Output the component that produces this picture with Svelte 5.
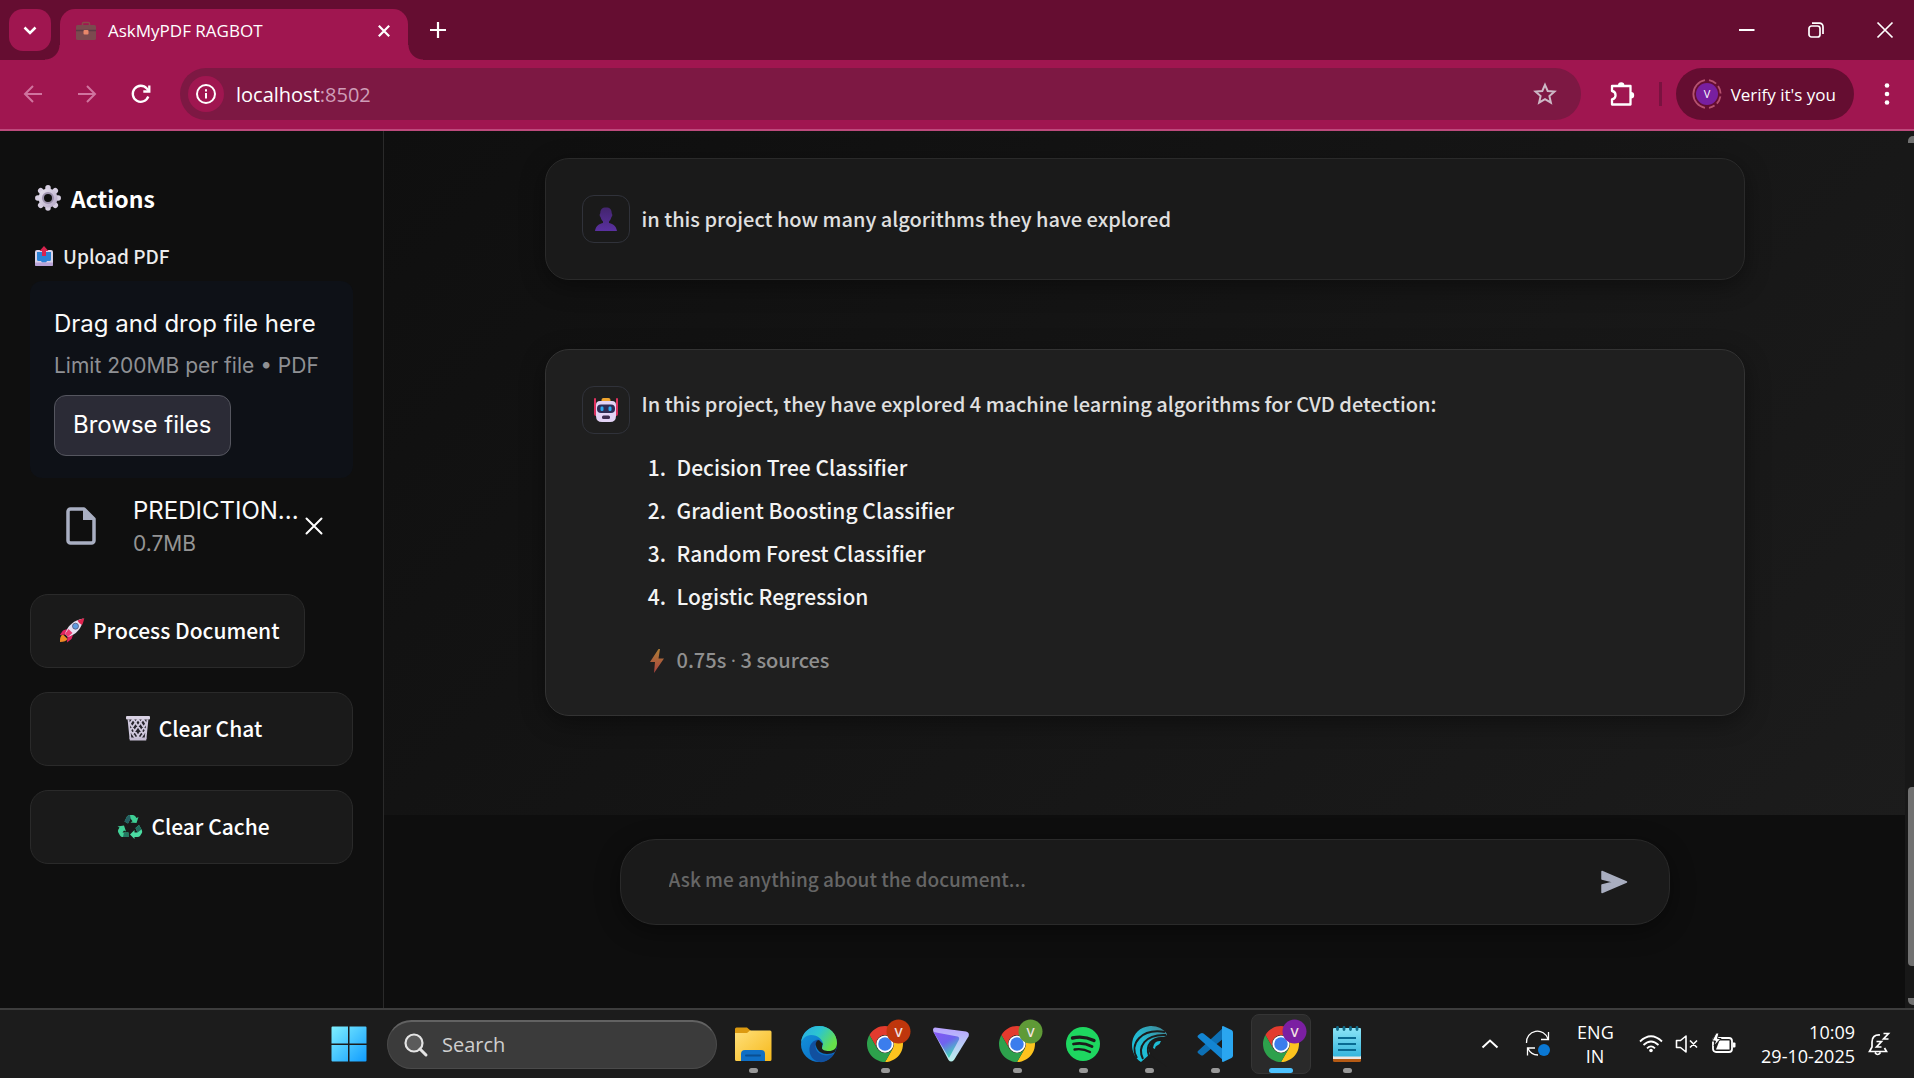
<script>
  let question = $state('');

  const algorithms = [
    'Decision Tree Classifier',
    'Gradient Boosting Classifier',
    'Random Forest Classifier',
    'Logistic Regression'
  ];
</script>

{#snippet cross()}
  <svg width="18" height="18" viewBox="0 0 18 18" fill="none" stroke="currentColor" stroke-width="2" stroke-linecap="round"><path d="M1.5 1.5l15 15M16.5 1.5l-15 15" /></svg>
{/snippet}

{#snippet chrome(color)}
  <svg width="48" height="48" viewBox="0 0 48 48">
    <g transform="translate(6 6) scale(.75)">
      <path d="M3.22 12A24 24 0 0 1 44.78 12L24 12A12 12 0 0 0 13.61 30Z" fill="#e33b2e" />
      <path d="M44.78 12A24 24 0 0 1 24 48L34.39 30A12 12 0 0 0 24 12Z" fill="#fcc31e" />
      <path d="M24 48A24 24 0 0 1 3.22 12L13.61 30A12 12 0 0 0 34.39 30Z" fill="#2da14c" />
      <circle cx="24" cy="24" r="11.5" fill="#fff" />
      <circle cx="24" cy="24" r="9" fill="#3b7ded" />
    </g>
    <circle cx="37.500" cy="11.500" r="12" fill={color} />
    <text x="37.500" y="16.500" text-anchor="middle" font-size="13" font-weight="600" fill="#f3e3e3">V</text>
  </svg>
{/snippet}

<div class="desktop">
  <header class="tabstrip">
    <button class="tabsearch" aria-label="Search tabs">
      <svg width="14" height="9" viewBox="0 0 14 9" fill="none" stroke="#fff" stroke-width="2.500"><path d="M1.500 1.500L7 7l5.500-5.500" /></svg>
    </button>
    <div class="tab">
      <svg width="20" height="20" viewBox="0 0 20 20">
        <path d="M6.500 4V2.500Q6.500 1.500 7.500 1.500h5Q13.500 1.500 13.500 2.500V4" fill="none" stroke="#8a4a4a" stroke-width="1.500" />
        <rect x="0" y="4" width="20" height="15" rx="1.500" fill="#7b4a4f" /><path d="M0 9.500h20" stroke="#5c3b44" stroke-width="1.500" />
        <rect x="7.500" y="9" width="5" height="4.500" rx="1" fill="#e8876a" />
      </svg>
      <span class="tabtitle">AskMyPDF RAGBOT</span>
      <button class="bare tabclose" aria-label="Close tab"><svg width="12" height="12" viewBox="0 0 12 12" stroke="#fff" stroke-width="2.200"><path d="M.8.8l10.400 10.400M11.200.8L.8 11.200" /></svg></button>
    </div>
    <button class="bare newtab" aria-label="New tab"><svg width="16" height="16" viewBox="0 0 16 16" stroke="#fff" stroke-width="2.200"><path d="M8 0v16M0 8h16" /></svg></button>
    <div class="wincontrols">
      <button class="bare" aria-label="Minimize"><svg width="16" height="16" viewBox="0 0 16 16"><path d="M0 8h15.500" stroke="#fff" stroke-width="2" /></svg></button>
      <button class="bare" aria-label="Restore"><svg width="16" height="16" viewBox="0 0 16 16" fill="none" stroke="#fff" stroke-width="1.700"><rect x="1" y="4" width="11" height="11" rx="2.500" /><path d="M4 1.200h7.500a3.500 3.500 0 0 1 3.500 3.500V12" /></svg></button>
      <button class="bare" aria-label="Close"><svg width="16" height="16" viewBox="0 0 16 16" stroke="#fff" stroke-width="1.700"><path d="M.5.5l15 15M15.500.5l-15 15" /></svg></button>
    </div>
  </header>

  <nav class="toolbar" aria-label="Browser">
    <div class="navbtns">
      <button class="bare dim" aria-label="Back"><svg width="20" height="20" viewBox="0 0 20 20" fill="none" stroke="currentColor" stroke-width="2"><path d="M19 10H2M10 2l-8 8 8 8" /></svg></button>
      <button class="bare dim" aria-label="Forward"><svg width="20" height="20" viewBox="0 0 20 20" fill="none" stroke="currentColor" stroke-width="2"><path d="M1 10h17M10 2l8 8-8 8" /></svg></button>
      <button class="bare" aria-label="Reload"><svg width="20" height="20" viewBox="0 0 20 20" fill="none" stroke="#fff" stroke-width="2.300"><path d="M17.300 12.500A8 8 0 1 1 15.800 4.500L18 7" /><path d="M18.300 1.500v6h-6" /></svg></button>
    </div>
    <div class="address">
      <button class="bare siteinfo" aria-label="Site information"><svg width="20" height="20" viewBox="0 0 20 20" fill="none" stroke="#fff" stroke-width="2"><circle cx="10" cy="10" r="9" /><path d="M10 9v5.500M10 5.200v2.200" /></svg></button>
      <span class="url">localhost<span>:8502</span></span>
      <button class="bare star" aria-label="Bookmark this page"><svg width="24" height="24" viewBox="0 0 24 24" fill="none" stroke="#cdb9c6" stroke-width="2"><path d="M12 2.800l2.700 6.200 6.800.6-5.100 4.500 1.500 6.600-5.900-3.500-5.900 3.500 1.500-6.600L2.500 9.600l6.800-.6z" /></svg></button>
    </div>
    <button class="bare ext" aria-label="Extensions"><svg width="26" height="26" viewBox="0 0 26 26"><path d="M3 5h18.500v18.500H3v-5.200a4.200 4.200 0 0 0 0-8.300z" fill="none" stroke="#fff" stroke-width="2.300" stroke-linejoin="round" /><path d="M9 4.500a3.200 3.200 0 0 1 6.400 0zM22 11a3.200 3.200 0 0 1 0 6.400z" fill="#fff" /></svg></button>
    <span class="divider"></span>
    <button class="profile">
      <svg width="30" height="30" viewBox="0 0 30 30"><circle cx="15" cy="15" r="11" fill="#781fa0" /><path d="M13 1.200A14 14 0 0 0 13 28.800" fill="none" stroke="#b5526f" stroke-width="1.800" /><path d="M17 1.200A14 14 0 0 1 17 28.800" fill="none" stroke="#b5526f" stroke-width="1.800" stroke-dasharray="8 3" /><text x="15" y="19" text-anchor="middle" font-size="11" fill="#fff">V</text></svg>
      Verify it's you
    </button>
    <button class="bare menu" aria-label="Menu"><svg width="6" height="22" viewBox="0 0 6 22" fill="#fff"><circle cx="3" cy="2.500" r="2.300" /><circle cx="3" cy="11" r="2.300" /><circle cx="3" cy="19.500" r="2.300" /></svg></button>
  </nav>

  <div class="page">
    <aside class="sidebar">
      <h2>
        <svg width="26" height="26" viewBox="0 0 26 26"><defs><linearGradient id="gear" x1="0" y1="0" x2="1" y2="1"><stop offset="0" stop-color="#e9e4f0" /><stop offset="1" stop-color="#b4a6c6" /></linearGradient></defs>
          <g stroke="#d5cde0" stroke-width="5.500" stroke-linecap="round"><path d="M13 2.800v20.300M2.800 13h20.400M5.700 5.700l14.600 14.600M20.300 5.700L5.700 20.300" /></g>
          <circle cx="13" cy="13" r="9.500" fill="url(#gear)" /><circle cx="13" cy="13" r="5" fill="#0f0f0f" stroke="#9d92ad" stroke-width="2" /></svg>
        Actions
      </h2>
      <label class="uplabel" for="browse">
        <svg width="18" height="22" viewBox="0 0 18 22"><rect x="0" y="5" width="18" height="16" rx="2" fill="#d8d2ea" /><path d="M2 7h14v7.500q0 1.500-1.500 1.500H12l-1 1.500H7L6 16H3.500Q2 16 2 14.500z" fill="#2b83d6" /><path d="M0 17.500h18V20a1 1 0 0 1-1 1H1a1 1 0 0 1-1-1z" fill="#b9a3d6" /><path d="M7 11V6H4.500L9 1l4.500 5H11v5z" fill="#d8244f" /></svg>
        Upload PDF
      </label>
      <section class="dropzone">
        <span class="drag">Drag and drop file here</span>
        <span class="limit">Limit 200MB per file • PDF</span>
        <button id="browse" class="browse">Browse files</button>
      </section>
      <div class="file">
        <svg width="30" height="38" viewBox="0 0 30 38"><path d="M4.500 2H18l10 10v21.500a2.500 2.500 0 0 1-2.500 2.500h-21A2.500 2.500 0 0 1 2 33.500v-29A2.500 2.500 0 0 1 4.500 2z" fill="none" stroke="#a9afc2" stroke-width="3.500" stroke-linejoin="round" /><path d="M17 1l12 12H17z" fill="#a9afc2" /></svg>
        <div class="fileinfo"><span class="filename">PREDICTION...</span><span class="filesize">0.7MB</span></div>
        <button class="bare" aria-label="Remove file">{@render cross()}</button>
      </div>
      <div class="actions">
        <button class="action process">
          <svg width="26" height="26" viewBox="0 0 26 26"><path d="M1 25q-.5-6 3-7.500L8.500 22Q7 25 1 25z" fill="#f08a24" /><path d="M8 12l-4 1.500L.8 18l6-.5zM14 18l-1.500 4L8 25.500l.5-6z" fill="#e3225f" /><path d="M6 17Q10 4 24.500 1.500 22 16 9 20z" fill="#e6dff0" /><path d="M18.500 3.500q3-1.500 6.800-2.200-.8 4-2.300 6.700-3-.8-4.500-4.500z" fill="#e0244f" /><circle cx="16.500" cy="9.200" r="3" fill="#5f9be0" stroke="#557" stroke-width=".8" /><path d="M6 17l3.500-5 4 4-4.500 4z" fill="#ec3a70" /></svg>
          Process Document
        </button>
        <button class="action">
          <svg width="26" height="26" viewBox="0 0 26 26"><path d="M2.500 3h21l-2 22h-17z" fill="#26242c" /><path d="M3.500 4.500L5.500 24M22.500 4.500L20.500 24M8 4l11 16M13 4l7.500 11M18 4l4 6M4.500 8L15 24M5 15l6 9M18 4L7 20M13 4L5.500 15M8 4l-4 6M21.500 8L11 24M21 15l-6 9" stroke="#cfc8dc" stroke-width="1.800" /><rect x="1" y="1" width="24" height="3.500" rx="1" fill="#d9d2e4" /><path d="M4.500 22.500h17l-.3 3H4.800z" fill="#c5bdd3" /></svg>
          Clear Chat
        </button>
        <button class="action">
          <svg width="26" height="24" viewBox="0 0 26 24"><path d="M7.500 7.500L10 2.500Q11 1 12.500 1H16q1.500 0 2.500 1.500l1 1.500 2-1-2 6-6-.5 2-1.200L13.500 4.500 11 9.500z" fill="#3ecf94" /><path d="M7.500 7.500L10 2.500Q11 1 13 1l.7 3.400L11 9.500z" fill="#255f62" /><path d="M22 11l2.800 5q1 2-.2 3.500L23 22q-.8 1-2.500 1h-3v2l-4.500-4.500 4.500-4.500v2.500h3L18.500 14z" fill="#4bdca2" /><path d="M22 11l2.500 4.500-4 3-2-4.500z" fill="#1f6a5b" /><path d="M11.500 18.500V23H5.500Q4 23 3 21.500L1.300 18.500q-.8-1.500 0-3L2.500 13.500l-2-1 6.500-1 2 6-2-1-1.500 2z" fill="#42d399" /><path d="M11.500 18.500V23H6l1-4.500z" fill="#237a62" /></svg>
          Clear Cache
        </button>
      </div>
    </aside>

    <main>
      <div class="chat">
        <article class="card user">
          <span class="avatar"><svg width="24" height="24" viewBox="0 0 24 24"><defs><linearGradient id="person" x1="0" y1="0" x2="0" y2="1"><stop offset="0" stop-color="#43256e" /><stop offset="1" stop-color="#5a31a0" /></linearGradient></defs><path d="M12 .5c4 0 5.700 2 5.700 5.500 0 1 .8 1 .6 2.500-.2 1-.8 1.300-1 2-.5 2-1.500 3.300-2.300 4v1.500c3 .8 7 2 8 8H1c1-6 5-7.200 8-8v-1.500c-.8-.7-1.800-2-2.300-4-.2-.7-.8-1-1-2C5.500 7 6.300 7 6.300 6 6.300 2.500 8 .5 12 .5z" fill="url(#person)" /></svg></span>
          <div class="body"><p>in this project how many algorithms they have explored</p></div>
        </article>
        <article class="card bot">
          <span class="avatar"><svg width="26" height="26" viewBox="0 0 26 26"><path d="M2 2v12M24 2v12" stroke="#e0305f" stroke-width="2" stroke-linecap="round" /><rect x="1" y="9" width="24" height="10" rx="2" fill="#d9305f" /><rect x="8.500" y="1" width="9" height="5" rx="2" fill="#f0a52e" /><path d="M3 8q0-4 4-4h12q4 0 4 4v11q0 6-6 6H9q-6 0-6-6z" fill="#e3d3f5" /><rect x="4" y="7.500" width="18" height="8.500" rx="4" fill="#2e2c55" /><rect x="7.500" y="9.500" width="3" height="4.500" rx="1.200" fill="#2da9f0" /><rect x="15.500" y="9.500" width="3" height="4.500" rx="1.200" fill="#2da9f0" /><rect x="9" y="18.500" width="8" height="3.500" rx="1.500" fill="#3c2c50" /></svg></span>
          <div class="body">
            <p>In this project, they have explored 4 machine learning algorithms for CVD detection:</p>
            <ol>
              {#each algorithms as name}<li>{name}</li>{/each}
            </ol>
            <div class="meta"><svg width="16" height="24" viewBox="0 0 16 24"><defs><linearGradient id="bolt" x1="0" y1="0" x2="0" y2="1"><stop offset="0" stop-color="#ad7d36" /><stop offset="1" stop-color="#a8423f" /></linearGradient></defs><path d="M9.500 0L1 13h5L5 24l10-14.500H9.500L11 0z" fill="url(#bolt)" /></svg><span>0.75s <span class="dot">·</span> 3 sources</span></div>
          </div>
        </article>
      </div>
      <div class="dock">
        <form class="composer" onsubmit={(e) => e.preventDefault()}>
          <input type="text" bind:value={question} placeholder="Ask me anything about the document..." aria-label="Question" />
          <button class="bare" aria-label="Send"><svg width="28" height="24" viewBox="0 0 28 24"><path d="M2 1.500L26.500 12 2 22.500v-7.500l12-3-12-3z" fill="#a9aec0" stroke="#a9aec0" stroke-width="1.500" stroke-linejoin="round" /></svg></button>
        </form>
      </div>
    </main>
    <div class="scroll" aria-hidden="true"><i class="up"></i><i class="thumb"></i><i class="down"></i></div>
  </div>

  <footer class="taskbar">
    <button class="bare start" aria-label="Start"><svg width="36" height="36" viewBox="0 0 36 36"><defs><linearGradient id="win" x1="0" y1="0" x2="1" y2="1"><stop offset="0" stop-color="#7ff0ff" /><stop offset="1" stop-color="#109cff" /></linearGradient></defs><path d="M1.500.5H17v17H.5V1.500a1 1 0 0 1 1-1zM18.500.5h16a1 1 0 0 1 1 1v16h-17zM.5 19H17v16.500H1.500a1 1 0 0 1-1-1zM18.500 19h17v15.500a1 1 0 0 1-1 1h-16z" fill="url(#win)" /></svg></button>
    <label class="search">
      <svg width="24" height="24" viewBox="0 0 24 24" fill="none" stroke="#e4e4e4"><circle cx="10" cy="10" r="8.500" fill="#5b5b5b" stroke-width="2.200" /><path d="M16 16l6 6" stroke-width="3" stroke-linecap="round" /></svg>
      <input type="text" placeholder="Search" aria-label="Search" />
    </label>
    <div class="apps">
      <button class="app run" aria-label="File Explorer"><svg width="48" height="48" viewBox="0 0 48 48"><defs><linearGradient id="fold" x1="0" y1="0" x2="1" y2="1"><stop offset="0" stop-color="#ffe07a" /><stop offset="1" stop-color="#f6b91c" /></linearGradient></defs><path d="M6 9a1.500 1.500 0 0 1 1.500-1.500H18l4 3.500v5H6z" fill="#dc9a10" /><path d="M6 13h12l3-2.500h20a1.500 1.500 0 0 1 1.500 1.500v27.500a1.500 1.500 0 0 1-1.500 1.500H7.500A1.500 1.500 0 0 1 6 39.500z" fill="url(#fold)" /><path d="M12 41v-7a4 4 0 0 1 4-4h16a4 4 0 0 1 4 4v7z" fill="#0f6fc5" /><path d="M17 35.500h14" stroke="#0a4f91" stroke-width="2" stroke-linecap="round" /></svg></button>
      <button class="app" aria-label="Edge"><svg width="48" height="48" viewBox="0 0 48 48"><defs><linearGradient id="edgetop" x1="0" y1="0" x2="1" y2=".5"><stop offset="0" stop-color="#2aa9e6" /><stop offset=".5" stop-color="#2cc5d0" /><stop offset="1" stop-color="#66e04a" /></linearGradient><linearGradient id="edgeleft" x1="0" y1="0" x2="1" y2="1"><stop offset="0" stop-color="#1397dc" /><stop offset="1" stop-color="#0a62c0" /></linearGradient></defs>
        <circle cx="24" cy="24" r="18" fill="url(#edgeleft)" />
        <path d="M24 42c-8-2-11-10-9-16 2-5 7-7 9-6-4 3-5 9 0 13 4 3 10 3 15 1-3 5-9 9-15 8z" fill="#11509f" />
        <path d="M24 20c-2 0-4 3-3 6 1 5 6 8 11 8 3 0 6-1 8-2l3-9-12 7c-4-1-5-4-3-6z" fill="#1c1c1c" />
        <path d="M6 23C7 12 15 6 24 6c11 0 18 8 18 17 0 6-4 8-8 8-4 0-7-1-7-3 0-1 1-2 1-4 0-4-5-9-12-9-5 0-9 4-10 8z" fill="url(#edgetop)" /></svg></button>
      <button class="app run" aria-label="Chrome profile 1">{@render chrome('#bf360c')}</button>
      <button class="app" aria-label="Proton VPN"><svg width="48" height="48" viewBox="0 0 48 48"><defs><linearGradient id="vpn" x1="0" y1="0" x2=".6" y2="1"><stop offset="0" stop-color="#8757f5" /><stop offset=".5" stop-color="#6f63ee" /><stop offset="1" stop-color="#3fdcb6" /></linearGradient><linearGradient id="vpnedge" x1="0" y1="0" x2="0" y2="1"><stop offset="0" stop-color="#b9a2ff" /><stop offset="1" stop-color="#b9f3ee" /></linearGradient></defs><path d="M8 7.500l31 4q4 1 2.500 5L27 40q-3 3-5.500 0L6.500 12Q5 8 8 7.500z" fill="url(#vpnedge)" /><path d="M6.500 12l24 4.500q2.500.8 1.300 3.500L22 38 6.500 12z" fill="url(#vpn)" /></svg></button>
      <button class="app run" aria-label="Chrome profile 2">{@render chrome('#5f9a37')}</button>
      <button class="app run" aria-label="Spotify"><svg width="48" height="48" viewBox="0 0 48 48"><circle cx="24" cy="24" r="17" fill="#1ed760" /><g fill="none" stroke="#1c1c1c" stroke-linecap="round"><path d="M13.500 18q11-2.500 21.500 2.500" stroke-width="3.400" /><path d="M14.500 24q9.500-2.200 18.500 2.500" stroke-width="2.800" /><path d="M15.500 29.500q8-1.500 15.500 2.500" stroke-width="2.300" /></g></svg></button>
      <button class="app run" aria-label="MySQL shell"><svg width="48" height="48" viewBox="0 0 48 48"><defs><linearGradient id="shell" x1="1" y1="0" x2="0" y2="1"><stop offset="0" stop-color="#45808d" /><stop offset=".5" stop-color="#25b7cf" /><stop offset="1" stop-color="#14c5de" /></linearGradient></defs><path d="M16 42C2 33 4 8 25 6q11-.5 17 8-1 3-4 3-12 2-14 10-1 4 1 7z" fill="url(#shell)" /><path d="M12 38C4 24 16 8 40 12M18 39C12 27 20 14 41 15M24 36C20 25 27 17 39 18" fill="none" stroke="#1c1c1c" stroke-width="2" /><path d="M27 36q-6-12 15-19v30z" fill="#1c1c1c" /><path d="M28 28q1-8 8-7-1 3-3 4-3 1-3 4z" fill="#1fbdd4" /></svg></button>
      <button class="app run" aria-label="Visual Studio Code"><svg width="48" height="48" viewBox="0 0 48 48"><path d="M33 7L7.500 30.500q-2 1.500 0 3l2 1.500q1.500 1 3 0L33 18z" fill="#0d70b5" /><path d="M33 41L7.500 18q-2-1.500 0-3l2-1.500q1.500-1 3 0L33 30z" fill="#1385d2" /><path d="M32 6l8.500 4q1.500.8 1.500 2.500v23q0 1.700-1.500 2.500L32 42q-1 0-1-1V7q0-1 1-1z" fill="#2aa6f0" /></svg></button>
      <button class="app run active" aria-label="Chrome profile 3">{@render chrome('#7b1fa2')}</button>
      <button class="app run" aria-label="Notepad"><svg width="48" height="48" viewBox="0 0 48 48"><defs><linearGradient id="note" x1="0" y1="0" x2="0" y2="1"><stop offset="0" stop-color="#8be4f7" /><stop offset="1" stop-color="#35b5dc" /></linearGradient></defs><rect x="10" y="32" width="28" height="10" rx="1.500" fill="#b55a14" /><rect x="10" y="32" width="28" height="7" fill="#eee7e2" /><rect x="10" y="8" width="28" height="28.500" rx="1" fill="url(#note)" /><path d="M15 18h18M15 24h18M15 30h18" stroke="#086a92" stroke-width="2" /><g stroke="#106b88" stroke-width="2.800" stroke-linecap="round"><path d="M14.500 7.500v2M21 7.500v2M27.500 7.500v2M34 7.500v2" /></g></svg></button>
    </div>
    <div class="tray">
      <button class="bare" aria-label="Hidden icons"><svg width="18" height="10" viewBox="0 0 18 10" fill="none" stroke="#fff" stroke-width="2"><path d="M1.500 8.500L9 1.500l7.500 7" /></svg></button>
      <button class="bare sync" aria-label="Sync"><svg width="26" height="26" viewBox="0 0 26 26" fill="none" stroke="#fff" stroke-width="1.300"><path d="M1.500 12A11 11 0 0 1 23 8M23.500 1v7.500H16M2.500 24.500V17H10M3 17.500Q6 24 13 24" /><circle cx="19" cy="19" r="6" fill="#0a78d4" stroke="none" /></svg></button>
      <button class="bare lang">ENG<br />IN</button>
      <button class="bare status" aria-label="Network, sound and battery">
        <svg width="24" height="18" viewBox="0 0 24 18" fill="none" stroke="#fff" stroke-width="1.800"><path d="M1 6.500q11-10.500 22 0M4.500 10q7.500-7 15 0M8 13.300q4-4 8 0" /><circle cx="12" cy="15.500" r="1.800" fill="#fff" stroke="none" /></svg>
        <svg width="24" height="18" viewBox="0 0 24 18" fill="none" stroke="#fff" stroke-width="1.600"><path d="M1.500 5.500h4L11 1v16l-5.500-4.500h-4zM15 5.500l7 7M22 5.500l-7 7" stroke-linejoin="round" /></svg>
        <svg width="26" height="22" viewBox="0 0 26 22"><rect x="2" y="5" width="19" height="14" rx="3" fill="none" stroke="#fff" stroke-width="1.800" /><path d="M8.500 7.500h10V16.500H5z" fill="#fff" /><path d="M22 9.500h1.500a1 1 0 0 1 1 1v3a1 1 0 0 1-1 1H22z" fill="#fff" /><path d="M5 0L1 8h3.500L3 13l7-7.500H6.500L8 0z" fill="#fff" stroke="#1c1c1c" stroke-width="1" /></svg>
      </button>
      <div class="clock"><time>10:09</time><time>29-10-2025</time></div>
      <button class="bare" aria-label="Notifications"><svg width="22" height="24" viewBox="0 0 22 24" fill="none" stroke="#fff" stroke-width="1.700"><path d="M12 3Q4 2.500 4 10v5l-2.500 4.500h17L16.500 16M7 20.500q2.500 4 5.500 0" /><path d="M15.500 1.500h5l-5 5.500h5M8.500 9.500h5l-5 5.500h5" /></svg></button>
    </div>
  </footer>
</div>

<style>
  :global(body) { margin: 0; background: #0f0f0f; }
  :global(*) { box-sizing: border-box; }
  .desktop { display: grid; grid-template-rows: auto auto 1fr auto; height: 100vh; overflow: hidden; color: #fff; font-family: "Open Sans", "Noto Sans", sans-serif; }
  svg { display: block; flex: none; overflow: visible; }
  button, input { font: inherit; color: inherit; margin: 0; }
  .bare { display: flex; align-items: center; justify-content: center; background: none; border: 0; padding: 0; }

  .tabstrip { display: flex; background: #650d31; height: 60px; padding: 9px 21px 0 9px; }
  .tabsearch { display: grid; place-items: center; width: 42px; height: 42px; border: 0; border-radius: 14px; background: #a01650; padding: 0; }
  .tab { position: relative; display: flex; align-items: center; gap: 12px; width: 348px; margin-left: 9px; padding: 0 18px 8px 16px; border-radius: 15px 15px 0 0; background: #a01650; font-size: 17px; }
  .tab::before, .tab::after { content: ""; position: absolute; bottom: 0; width: 15px; height: 15px; }
  .tab::before { right: 100%; background: radial-gradient(circle at 0 0, transparent 14px, #a01650 15px); }
  .tab::after { left: 100%; background: radial-gradient(circle at 100% 0, transparent 14px, #a01650 15px); }
  .tabtitle { flex: 1; }
  .newtab { width: 60px; height: 42px; }
  .wincontrols { display: flex; gap: 53px; margin-left: auto; height: 42px; }

  .toolbar { display: flex; align-items: center; background: #a01650; height: 71px; padding: 8px 24px 9px 23px; border-bottom: 2px solid #bd4a7c; }
  .navbtns { display: flex; gap: 34px; margin-right: 29px; }
  .dim { color: #d0749f; }
  .address { flex: 1; display: flex; align-items: center; height: 52px; padding: 0 24px 0 8px; border-radius: 26px; background: #7d1843; font-size: 20px; }
  .siteinfo { width: 36px; height: 36px; border-radius: 50%; background: #a01650; margin-right: 12px; }
  .url span { color: #cf9db7; }
  .star { margin-left: auto; }
  .ext { margin-left: 28px; }
  .divider { width: 3px; height: 24px; margin: 0 14px 0 24px; background: #7a1240; }
  .profile { display: flex; align-items: center; gap: 9px; height: 52px; padding: 0 18px 0 16px; border: 0; border-radius: 26px; background: #650d31; font-size: 17px; white-space: nowrap; }
  .menu { margin-left: 30px; }

  .page { display: flex; min-height: 0; overflow: hidden; font-family: "Noto Sans CJK SC", "Source Sans Pro", sans-serif; font-weight: 500; }
  .sidebar { flex: none; width: 384px; padding: 49px 30px 0; border-right: 1px solid #2a2a2a; background: #0f0f0f; }
  h2 { display: flex; align-items: center; gap: 10px; margin: 0 0 24px; padding-left: 5px; font-size: 23px; line-height: 36px; font-weight: 700; }
  .uplabel { display: flex; align-items: center; gap: 10px; padding-left: 5px; margin-bottom: 9px; font-size: 19px; line-height: 32px; color: #ececec; }
  .dropzone { display: flex; flex-direction: column; align-items: flex-start; width: 323px; padding: 25px 24px 22px; border-radius: 12px; background: #0e1117; font-family: Inter, sans-serif; font-weight: 400; }
  .drag { font-size: 24px; line-height: 36px; color: #fafafa; white-space: nowrap; }
  .limit { font-size: 21px; line-height: 32px; margin: 8px 0 13px; color: #8f9094; white-space: nowrap; }
  .browse { height: 61px; padding: 0 18px 2px; border: 1px solid #55565f; border-radius: 12px; background: #2b2b36; font-size: 24px; white-space: nowrap; }
  .file { display: flex; align-items: center; margin: 15px 0 35px; padding: 0 0 0 36px; font-family: Inter, sans-serif; font-weight: 400; }
  .fileinfo { display: flex; flex-direction: column; margin: 0 8px 0 37px; width: 164px; white-space: nowrap; }
  .filename { font-size: 24px; line-height: 36px; color: #fafafa; }
  .filesize { font-size: 21px; line-height: 30px; color: #949494; }
  .actions { display: flex; flex-direction: column; align-items: flex-start; gap: 24px; }
  .action { display: flex; align-items: center; justify-content: center; gap: 8px; width: 323px; height: 74px; padding: 0 24px 2px 28px; border: 1px solid #2a2a2a; border-radius: 18px; background: #1a1a1a; font-size: 21px; white-space: nowrap; }
  .process { width: auto; }

  main { flex: 1; min-width: 0; display: flex; flex-direction: column; background: linear-gradient(135deg, #0f0f0f, #1d1d1d); }
  .chat { flex: 1; min-height: 0; display: flex; flex-direction: column; gap: 69px; padding: 27px 24px 0; overflow: hidden; }
  .card { display: flex; gap: 12px; width: 100%; max-width: 1200px; margin: 0 auto; padding: 36px; border: 1px solid #2a2a2a; border-radius: 24px; background: #1a1a1a; box-shadow: 0 6px 24px rgba(0, 0, 0, .4); font-size: 20px; line-height: 36px; }
  .user { align-items: center; }
  .bot { background: #1f1f1f; border-color: #333; }
  .avatar { flex: none; display: grid; place-items: center; width: 48px; height: 48px; border: 1px solid #30323a; border-radius: 12px; }
  .body { color: #e0e0e0; }
  p { margin: 0; }
  ol { margin: 24px 0; padding-left: 35px; font-size: 21px; line-height: 43px; color: #f4f4f4; }
  li::marker { content: counter(list-item) ".\2002"; }
  .meta { display: flex; align-items: center; gap: 12px; padding-left: 7px; color: #8f8f8f; }
  .dot { font-family: "Open Sans", sans-serif; }
  .dock { padding: 24px 24px 83px; background: #0e0e0e; }
  .composer { display: flex; align-items: center; max-width: 1050px; height: 86px; margin: 0 auto; padding: 0 41px 0 48px; border: 1px solid #2a2a2a; border-radius: 36px; background: #1a1a1a; box-shadow: 0 6px 24px rgba(0, 0, 0, .4); }
  .composer input { flex: 1; min-width: 0; height: 36px; margin-bottom: 8px; padding: 0; border: 0; outline: 0; background: none; font-size: 19px; }
  .composer input::placeholder { color: #666; opacity: 1; }
  .scroll { flex: none; display: flex; flex-direction: column; width: 9px; padding: 5px 0 3px 3px; background: #181818; }
  .scroll i { width: 6px; background: #717171; }
  .up { height: 7px; border-radius: 5px 0 0 0; }
  .thumb { height: 179px; margin: auto 0 32px; border-radius: 4px 0 0 4px; }
  .down { height: 7px; border-radius: 0 0 0 5px; }

  .taskbar { display: flex; align-items: center; height: 70px; padding: 0 24px 0 331px; border-top: 2px solid #3d3d3d; background: #1c1c1c; }
  .search { display: flex; align-items: center; gap: 14px; width: 330px; height: 49px; margin: 0 6px 0 20px; padding-left: 16px; border: 1px solid #4a4a4a; border-top: 2px solid #626262; border-radius: 25px; background: #3b3b3b; }
  .search input { width: 200px; padding: 0; border: 0; outline: 0; background: none; font-size: 20px; }
  .search input::placeholder { color: #cfcfcf; opacity: 1; }
  .apps { display: flex; gap: 6px; }
  .app { position: relative; display: grid; place-items: center; width: 60px; height: 60px; padding: 0; border: 1px solid transparent; border-radius: 8px; background: none; }
  .active { background: #2a2a2a; border-color: #353535; }
  .run::after { content: ""; position: absolute; bottom: 0; left: 50%; width: 9px; height: 5px; margin-left: -4px; border-radius: 3px; background: #999; }
  .active::after { width: 24px; margin-left: -12px; background: #4cc2ff; }
  .tray { display: flex; align-items: center; margin-left: auto; font-size: 18px; line-height: 24px; }
  .sync { margin: 0 26px; }
  .lang { width: 36px; text-align: center; display: block; }
  .status { gap: 12px; margin: 0 24px 0 26px; }
  .clock { display: flex; flex-direction: column; text-align: right; margin-right: 13px; }
</style>
